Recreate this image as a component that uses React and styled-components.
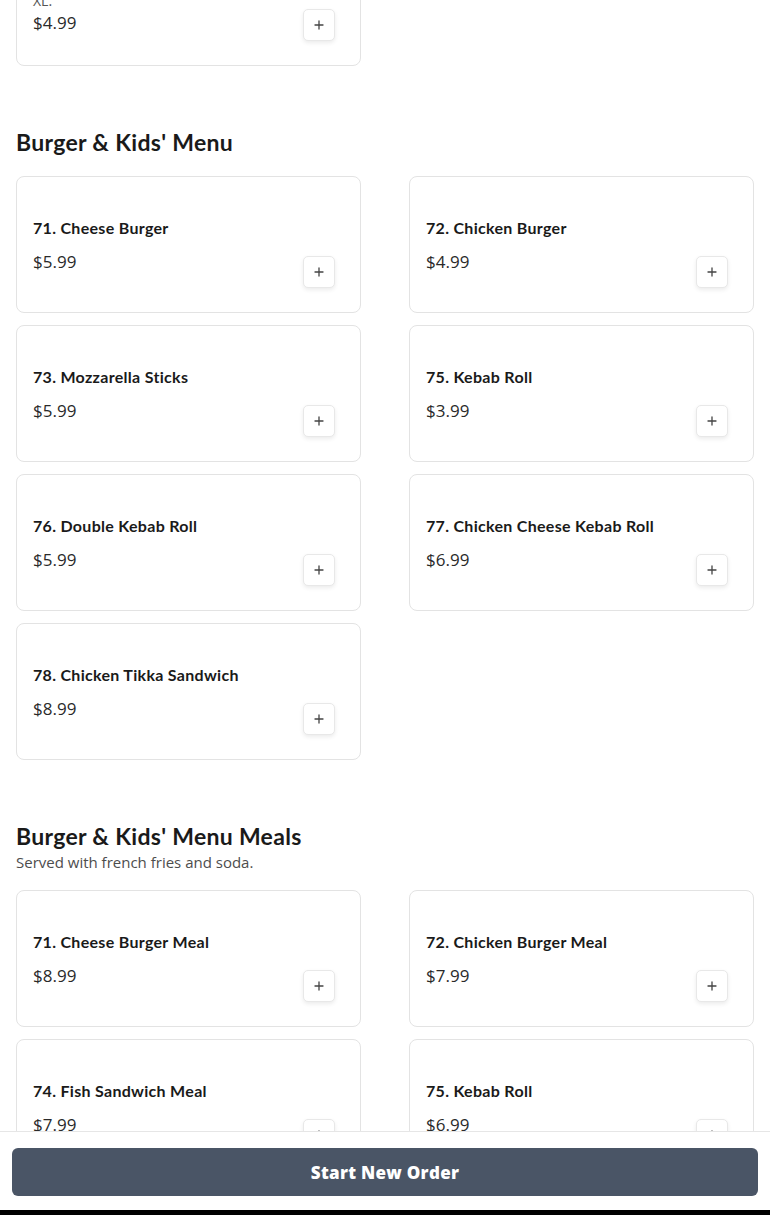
import React from "react";
import styled, { createGlobalStyle } from "styled-components";

const GlobalStyle = createGlobalStyle`
  * { box-sizing: border-box; }
  html, body { margin: 0; padding: 0; background: #ffffff; }
  body { font-family: "Lato", "Open Sans", sans-serif; color: #1c1c1c; overflow: hidden; }
`;

const Page = styled.div`
  padding: 0 16px 120px;
  display: flex;
  flex-direction: column;
  gap: 62px;
`;

const Section = styled.section`
  display: flex;
  flex-direction: column;
  margin-top: ${(p) => p.$offset || 0}px;
`;

const SectionHeader = styled.header`
  display: flex;
  flex-direction: column;
  margin-bottom: ${(p) => (p.$hasSub ? 18 : 20)}px;
`;

const SectionTitle = styled.h2`
  margin: 0;
  font-family: "Lato", sans-serif;
  font-weight: 700;
  font-size: 23px;
  line-height: 28px;
  color: #1a1a1a;
  letter-spacing: 0.3px;
`;

const SectionSub = styled.p`
  margin: 2px 0 0;
  font-family: "Open Sans", sans-serif;
  font-size: 15px;
  line-height: 20px;
  color: #4d4d4d;
`;

const Grid = styled.div`
  display: grid;
  grid-template-columns: 345px 345px;
  column-gap: 48px;
  row-gap: 12px;
`;

const Card = styled.article`
  display: flex;
  align-items: center;
  justify-content: space-between;
  min-height: 137px;
  padding: 24px 25px 24px 16px;
  border: 1px solid #e3e3e3;
  border-radius: 8px;
  background: #fff;
`;

const CardBody = styled.div`
  display: flex;
  flex-direction: column;
  padding: 8px 0 ${(p) => (p.$hasDesc ? 2 : 6)}px;
`;

const ItemName = styled.h3`
  margin: 0;
  font-family: "Lato", sans-serif;
  font-weight: 700;
  font-size: 16px;
  line-height: 20px;
  color: #1a1a1a;
  letter-spacing: 0.3px;
`;

const ItemDesc = styled.p`
  margin: 4px 0 0;
  font-family: "Open Sans", sans-serif;
  font-size: 14px;
  line-height: 20px;
  color: #555;
`;

const Price = styled.span`
  margin-top: ${(p) => (p.$tight ? 0 : 12)}px;
  font-family: "Open Sans", sans-serif;
  font-weight: 400;
  font-size: 17px;
  line-height: 24px;
  color: #2a2a2a;
`;

const AddButton = styled.button`
  align-self: flex-end;
  width: 32px;
  height: 32px;
  flex: none;
  display: flex;
  align-items: center;
  justify-content: center;
  padding: 0;
  background: #fff;
  border: 1px solid #e8e8e8;
  border-radius: 5px;
  box-shadow: 0 2px 4px rgba(0, 0, 0, 0.08);
  color: #444;
  cursor: pointer;
`;

const Footer = styled.footer`
  position: fixed;
  left: 0;
  right: 0;
  bottom: 0;
  background: #fff;
  border-top: 1px solid #e6e6e6;
  display: flex;
  flex-direction: column;
`;

const FooterInner = styled.div`
  padding: 16px 12px 14px;
`;

const OrderButton = styled.button`
  width: 100%;
  height: 48px;
  border: none;
  border-radius: 6px;
  background: #4a5566;
  color: #fff;
  font-family: "Open Sans", sans-serif;
  font-weight: 800;
  font-size: 17px;
  letter-spacing: 0.3px;
  cursor: pointer;
`;

const BottomStrip = styled.div`
  height: 5px;
  background: #000;
`;

const PlusIcon = () => (
  <svg width="10" height="10" viewBox="0 0 10 10" aria-hidden="true">
    <path d="M5 1v8M1 5h8" stroke="currentColor" strokeWidth="1.3" strokeLinecap="round" />
  </svg>
);

const MenuCard = ({ name, desc, price }) => (
  <Card>
    <CardBody $hasDesc={!!desc}>
      <ItemName>{name}</ItemName>
      {desc && <ItemDesc>{desc}</ItemDesc>}
      <Price $tight={!!desc}>{price}</Price>
    </CardBody>
    <AddButton aria-label={`Add ${name}`}>
      <PlusIcon />
    </AddButton>
  </Card>
);

const burgers = [
  { name: "71. Cheese Burger", price: "$5.99" },
  { name: "72. Chicken Burger", price: "$4.99" },
  { name: "73. Mozzarella Sticks", price: "$5.99" },
  { name: "75. Kebab Roll", price: "$3.99" },
  { name: "76. Double Kebab Roll", price: "$5.99" },
  { name: "77. Chicken Cheese Kebab Roll", price: "$6.99" },
  { name: "78. Chicken Tikka Sandwich", price: "$8.99" },
];

const meals = [
  { name: "71. Cheese Burger Meal", price: "$8.99" },
  { name: "72. Chicken Burger Meal", price: "$7.99" },
  { name: "74. Fish Sandwich Meal", price: "$7.99" },
  { name: "75. Kebab Roll", price: "$6.99" },
  { name: "76. Double Kebab Roll", price: "$8.99" },
  { name: "78. Chicken Tikka Sandwich", price: "$10.99" },
];

export default function App() {
  return (
    <>
      <GlobalStyle />
      <Page>
        <Section $offset={-71}>
          <Grid>
            <MenuCard name="Fries" desc="XL." price="$4.99" />
          </Grid>
        </Section>

        <Section>
          <SectionHeader>
            <SectionTitle>Burger &amp; Kids' Menu</SectionTitle>
          </SectionHeader>
          <Grid>
            {burgers.map((item) => (
              <MenuCard key={item.name} {...item} />
            ))}
          </Grid>
        </Section>

        <Section>
          <SectionHeader $hasSub>
            <SectionTitle>Burger &amp; Kids' Menu Meals</SectionTitle>
            <SectionSub>Served with french fries and soda.</SectionSub>
          </SectionHeader>
          <Grid>
            {meals.map((item) => (
              <MenuCard key={item.name} {...item} />
            ))}
          </Grid>
        </Section>
      </Page>
      <Footer>
        <FooterInner>
          <OrderButton>Start New Order</OrderButton>
        </FooterInner>
        <BottomStrip />
      </Footer>
    </>
  );
}
